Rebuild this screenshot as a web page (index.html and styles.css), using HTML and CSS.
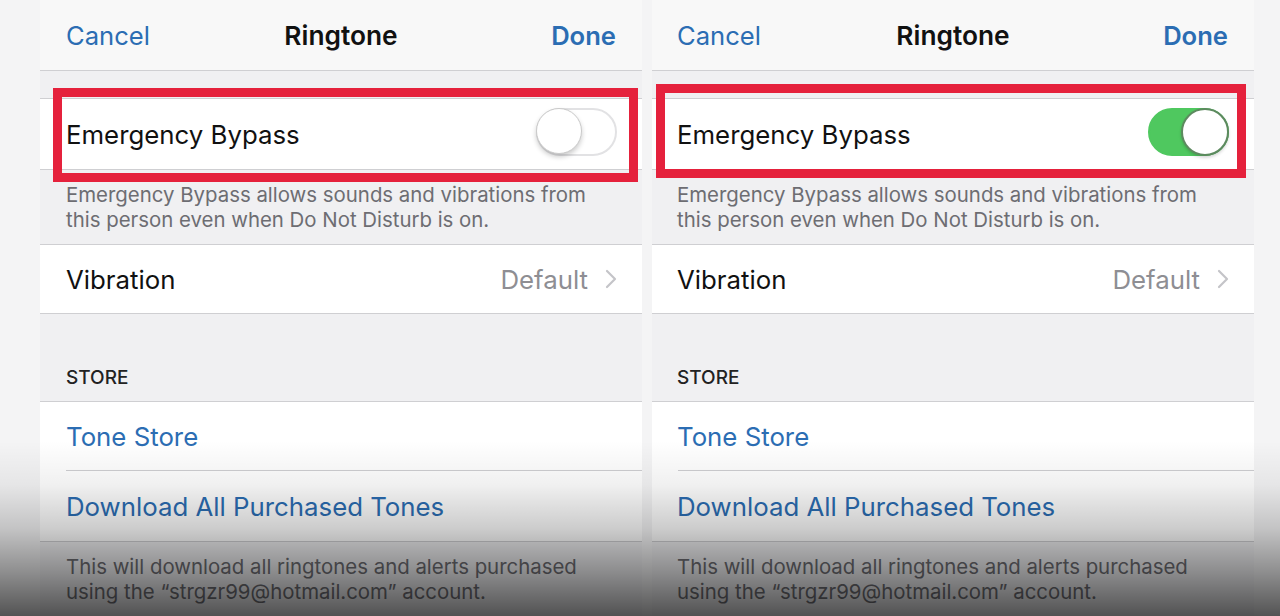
FILE: index.html
```html
<!DOCTYPE html>
<html>
<head>
<meta charset="utf-8">
<link rel="stylesheet" href="styles.css">
</head>
<body>
<div class="stage">
  <section class="panel">
    <header class="nav">
      <span class="nav-link">Cancel</span>
      <span class="nav-title">Ringtone</span>
      <span class="nav-link nav-done">Done</span>
    </header>
    <div class="spacer"></div>
    <div class="group">
      <div class="row">
        <span class="label">Emergency Bypass</span>
        <span class="toggle"><span class="knob"></span></span>
      </div>
      <div class="highlight highlight-left"></div>
    </div>
    <p class="note">Emergency Bypass allows sounds and vibrations from<br>this person even when Do Not Disturb is on.</p>
    <div class="group">
      <div class="row row-short">
        <span class="label">Vibration</span>
        <span class="detail">Default
          <svg class="chevron" width="12" height="20" viewBox="0 0 12 20"><path d="M2 2 L10 10 L2 18" fill="none" stroke="#c4c4c8" stroke-width="2.2" stroke-linecap="round" stroke-linejoin="round"/></svg>
        </span>
      </div>
    </div>
    <div class="section-head">STORE</div>
    <div class="group">
      <div class="row row-short row-inset">
        <span class="label link">Tone Store</span>
      </div>
      <div class="row">
        <span class="label link">Download All Purchased Tones</span>
      </div>
    </div>
    <p class="note">This will download all ringtones and alerts purchased<br>using the “strgzr99@hotmail.com” account.</p>
  </section>

  <section class="panel">
    <header class="nav">
      <span class="nav-link">Cancel</span>
      <span class="nav-title">Ringtone</span>
      <span class="nav-link nav-done">Done</span>
    </header>
    <div class="spacer"></div>
    <div class="group">
      <div class="row">
        <span class="label">Emergency Bypass</span>
        <span class="toggle toggle-on"><span class="knob"></span></span>
      </div>
      <div class="highlight highlight-right"></div>
    </div>
    <p class="note">Emergency Bypass allows sounds and vibrations from<br>this person even when Do Not Disturb is on.</p>
    <div class="group">
      <div class="row row-short">
        <span class="label">Vibration</span>
        <span class="detail">Default
          <svg class="chevron" width="12" height="20" viewBox="0 0 12 20"><path d="M2 2 L10 10 L2 18" fill="none" stroke="#c4c4c8" stroke-width="2.2" stroke-linecap="round" stroke-linejoin="round"/></svg>
        </span>
      </div>
    </div>
    <div class="section-head">STORE</div>
    <div class="group">
      <div class="row row-short row-inset">
        <span class="label link">Tone Store</span>
      </div>
      <div class="row">
        <span class="label link">Download All Purchased Tones</span>
      </div>
    </div>
    <p class="note">This will download all ringtones and alerts purchased<br>using the “strgzr99@hotmail.com” account.</p>
  </section>
</div>
<div class="shade"></div>
</body>
</html>
```
FILE: styles.css
```css
html, body {
  margin: 0;
  padding: 0;
}
body {
  width: 1280px;
  height: 616px;
  overflow: hidden;
  background: #f4f4f5;
  font-family: Inter, "Noto Sans", sans-serif;
  position: relative;
}
.stage {
  display: flex;
  gap: 10px;
  padding-left: 40px;
}
.panel {
  width: 602px;
  background: #f0f0f2;
}
.panel + .panel .nav,
.panel + .panel .row,
.panel + .panel .note,
.panel + .panel .section-head {
  padding-left: 25px;
}
.nav {
  height: 70px;
  background: #f8f8f8;
  border-bottom: 1px solid #cfcfd2;
  display: flex;
  align-items: center;
  justify-content: space-between;
  padding: 0 26px;
  position: relative;
}
.nav-link {
  font-size: 25.6px;
  color: #2b6db3;
}
.nav-done {
  font-weight: 600;
}
.nav-title {
  font-size: 26.3px;
  font-weight: 600;
  color: #111;
  position: absolute;
  left: 0;
  right: 0;
  text-align: center;
  pointer-events: none;
}
.spacer {
  height: 27px;
}
.group {
  position: relative;
  background: #fff;
  border-top: 1px solid #cfcfd2;
  border-bottom: 1px solid #cfcfd2;
}
.row {
  height: 70px;
  display: flex;
  align-items: center;
  justify-content: space-between;
  padding: 0 25px 0 26px;
}
.row-short {
  height: 68px;
}
.row-inset {
  position: relative;
}
.row-inset::after {
  content: "";
  position: absolute;
  left: 26px;
  right: 0;
  bottom: -1px;
  height: 1px;
  background: #cfcfd2;
}
.row-inset + .row {
  margin-top: 1px;
}
.label {
  font-size: 25.8px;
  color: #111;
}
.link {
  color: #2b6db3;
}
.detail {
  display: flex;
  align-items: center;
  gap: 17px;
  font-size: 25.8px;
  color: #8e8e93;
}
.chevron {
  display: block;
}
.toggle {
  width: 81px;
  height: 48px;
  box-sizing: border-box;
  border-radius: 24px;
  border: 2px solid #e2e2e4;
  background: #fff;
  position: relative;
  margin-top: -4px;
}
.knob {
  position: absolute;
  top: -2px;
  left: -2px;
  width: 46px;
  height: 46px;
  box-sizing: border-box;
  border-radius: 50%;
  background: #fff;
  border: 1px solid #cacaca;
  box-shadow: 0 3px 5px rgba(0, 0, 0, 0.2);
}
.toggle-on {
  background: #4fc85f;
  border-color: #4fc85f;
}
.toggle-on .knob {
  left: auto;
  right: -2px;
  width: 48px;
  height: 48px;
  top: -2px;
  border: 2px solid #5d8a5f;
  box-shadow: 0 2px 3px rgba(0, 0, 0, 0.15);
}
.highlight {
  position: absolute;
  border: 9px solid #e5213c;
  pointer-events: none;
}
.highlight-left {
  top: -11px;
  bottom: -13px;
  left: 13px;
  right: 4px;
}
.highlight-right {
  top: -15px;
  bottom: -9px;
  left: 4px;
  right: 8px;
}
.note {
  margin: 0;
  padding: 12px 10px 12px 26px;
  font-size: 20.4px;
  line-height: 25px;
  color: #6d6d72;
  white-space: nowrap;
}
.section-head {
  height: 87px;
  box-sizing: border-box;
  padding: 52px 26px 0;
  font-size: 19px;
  line-height: 24px;
  font-weight: 500;
  color: #222;
}
.shade {
  position: absolute;
  left: 0;
  right: 0;
  bottom: 0;
  height: 175px;
  background: linear-gradient(to bottom,
    rgba(0, 0, 0, 0) 0%,
    rgba(0, 0, 0, 0.06) 25%,
    rgba(0, 0, 0, 0.2) 50%,
    rgba(0, 0, 0, 0.42) 75%,
    rgba(0, 0, 0, 0.66) 100%);
  pointer-events: none;
}
```
